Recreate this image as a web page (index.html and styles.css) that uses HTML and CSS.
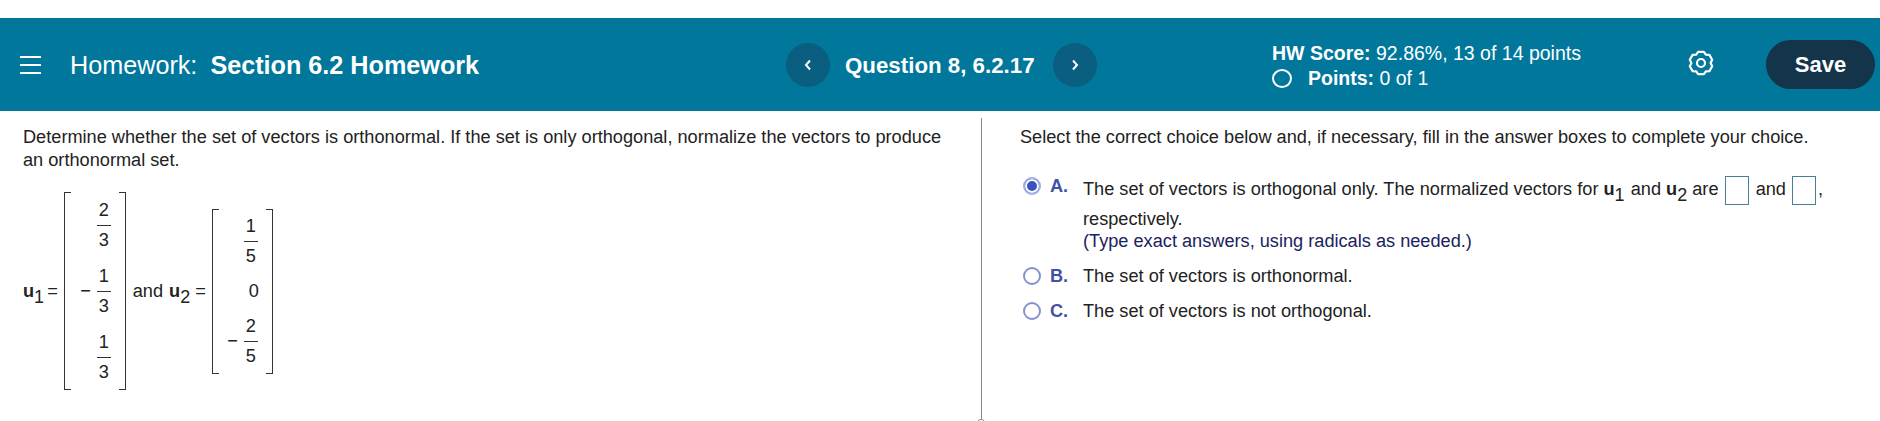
FILE: index.html
```html
<!DOCTYPE html>
<html lang="en">
<head>
<meta charset="utf-8">
<title>Homework: Section 6.2 Homework</title>
<link rel="stylesheet" href="styles.css">
</head>
<body>
<div class="spacer"></div>
<header class="bar">
  <div class="bar-left">
    <svg class="menu" viewBox="0 0 21 18" width="21" height="18"><path d="M0 1h21M0 9h21M0 17h21" stroke="#fff" stroke-width="2" fill="none"/></svg>
    <div class="title">Homework:<b>Section 6.2 Homework</b></div>
  </div>
  <nav class="qnav">
    <span class="round"><svg viewBox="0 0 8 12" width="8" height="12"><path d="M6 1.500 2 6l4 4.500" stroke="#fff" stroke-width="2" fill="none"/></svg></span>
    <b class="qname">Question 8, 6.2.17</b>
    <span class="round"><svg viewBox="0 0 8 12" width="8" height="12"><path d="M2 1.500 6 6l-4 4.500" stroke="#fff" stroke-width="2" fill="none"/></svg></span>
  </nav>
  <div class="score">
    <div><b>HW Score:</b> 92.86%, 13 of 14 points</div>
    <div class="points"><span class="ring"></span><span><b>Points:</b> 0 of 1</span></div>
  </div>
  <svg class="gear" viewBox="0 0 26 26" width="26" height="26"><path d="M10.100 1.900 15.900 1.900 17.800 4.700 21.400 4.900 24.200 9.700 22.600 13 24.200 16.300 21.400 21.100 17.800 21.300 15.900 24.100 10.100 24.100 8.200 21.300 4.600 21.100 1.800 16.300 3.400 13 1.800 9.700 4.600 4.900 8.200 4.700Z" fill="none" stroke="#fff" stroke-width="2.200" stroke-linejoin="round"/><circle cx="13" cy="13" r="4" fill="none" stroke="#fff" stroke-width="2.200"/></svg>
  <button class="save">Save</button>
</header>
<main class="panes">
  <section class="left">
    <p class="prompt">Determine whether the set of vectors is orthonormal. If the set is only orthogonal, normalize the vectors to produce an orthonormal set.</p>
    <div class="eq">
      <span class="vec"><b>u</b><sub>1</sub></span><span class="eqs">=</span>
      <div class="matrix m1">
        <span class="br l"></span>
        <div class="cells">
          <div class="cell"><span class="frac"><span class="num">2</span><span class="den">3</span></span></div>
          <div class="cell"><span class="minus">−</span><span class="frac"><span class="num">1</span><span class="den">3</span></span></div>
          <div class="cell"><span class="frac"><span class="num">1</span><span class="den">3</span></span></div>
        </div>
        <span class="br r"></span>
      </div>
      <span class="and">and</span><span class="vec"><b>u</b><sub>2</sub></span><span class="eqs">=</span>
      <div class="matrix m2">
        <span class="br l"></span>
        <div class="cells">
          <div class="cell"><span class="frac"><span class="num">1</span><span class="den">5</span></span></div>
          <div class="cell zero">0</div>
          <div class="cell"><span class="minus">−</span><span class="frac"><span class="num">2</span><span class="den">5</span></span></div>
        </div>
        <span class="br r"></span>
      </div>
    </div>
  </section>
  <section class="right">
    <p class="prompt">Select the correct choice below and, if necessary, fill in the answer boxes to complete your choice.</p>
    <div class="choice first">
      <span class="radio on"></span><span class="letter">A.</span>
      <div class="body">
        <div class="line">The set of vectors is orthogonal only. The normalized vectors for <b>u</b><sub>1</sub> <span class="gap">and</span> <b>u</b><sub>2</sub> are <span class="box"></span> and <span class="box"></span>,</div>
        <div class="resp">respectively.</div>
        <div class="hint">(Type exact answers, using radicals as needed.)</div>
      </div>
    </div>
    <div class="choice"><span class="radio"></span><span class="letter">B.</span><div class="body">The set of vectors is orthonormal.</div></div>
    <div class="choice"><span class="radio"></span><span class="letter">C.</span><div class="body">The set of vectors is not orthogonal.</div></div>
    <span class="handle"></span>
  </section>
</main>
</body>
</html>
```
FILE: styles.css
```css
* { box-sizing: border-box; }
html, body { margin: 0; height: 421px; overflow: hidden; background: #fff; }
body { font-family: "Liberation Sans", Arial, sans-serif; font-size: 18.18px; color: #222; }
.spacer { height: 18px; }
.bar { height: 93px; background: #00779b; color: #fff; display: flex; align-items: center; padding: 0 5px 0 20px; }
.bar-left { display: flex; align-items: center; width: 766px; flex: none; }
.menu { margin-right: 29px; }
.title { font-size: 25.2px; padding-top: 2px; }
.title b { margin-left: 13px; }
.qnav { display: flex; align-items: center; width: 486px; flex: none; }
.round { width: 44px; height: 44px; border-radius: 50%; background: #0a5f80; display: flex; align-items: center; justify-content: center; }
.qname { font-size: 22.3px; margin: 2px 18px 0 15px; white-space: nowrap; }
.score { width: 416px; flex: none; font-size: 19.5px; line-height: 25px; padding-top: 2px; }
.points { display: flex; align-items: center; gap: 16px; }
.ring { width: 20px; height: 19px; border: 2.5px solid #fff; border-radius: 50%; }
.gear { margin: 0 52px 3px 0; flex: none; }
.save { width: 109px; height: 49px; border: 0; border-radius: 25px; background: #14344a; color: #fff; font: bold 22px "Liberation Sans", Arial, sans-serif; flex: none; }
.panes { display: flex; height: 310px; }
.left { width: 982px; flex: none; padding: 8px 0 0 23px; border-right: 1px solid #8a8a8a; margin-top: 7px; }
.right { position: relative; flex: 1; min-width: 0; padding: 0 0 0 38px; margin-top: 7px; }
.prompt { margin: 0; line-height: 23px; width: 930px; }
.right .prompt { margin-top: 8px; width: auto; }
.eq { display: flex; align-items: center; margin-top: 19px; height: 200px; }
.vec { white-space: nowrap; }
sub { font-size: 18px; line-height: 0; vertical-align: -6px; }
.eqs { margin: 0 6px 0 3px; }
.and + .vec + .eqs { margin-left: 5px; }
.matrix { display: flex; align-items: stretch; }
.m1 { width: 62px; height: 198px; }
.m2 { width: 61px; height: 165px; }
.br { width: 7px; flex: none; border: 1px solid #333; }
.br.l { border-right: 0; }
.br.r { border-left: 0; }
.cells { flex: 1; display: flex; flex-direction: column; justify-content: space-around; }
.cell { display: flex; justify-content: flex-end; align-items: center; padding-right: 8px; }
.cell.zero { padding-right: 7px; line-height: 22px; }
.frac { display: flex; flex-direction: column; align-items: center; width: 14px; line-height: 22px; }
.num { padding-bottom: 4px; }
.den { border-top: 1px solid #333; width: 14px; text-align: center; padding-top: 3px; }
.minus { margin-right: 6px; }
.and { margin: 0 6px 0 7px; }
.choice { display: flex; margin-top: 13px; line-height: 22px; }
.choice.first { margin-top: 26px; }
.radio { width: 18px; height: 18px; flex: none; border: 2px solid #8592d0; border-radius: 50%; margin: 2px 9px 0 3px; background: #fff; }
.radio.on { background: #3a52c0; border-color: #9fb0e2; box-shadow: inset 0 0 0 2px #fff; }
.letter { width: 33px; flex: none; color: #3f51a8; font-weight: bold; }
.line { white-space: nowrap; padding-top: 1px; }
.gap { margin-left: 1px; }
.box { display: inline-block; width: 24px; height: 29px; border: 1px solid #4a7d98; vertical-align: middle; margin: 0 2px 0 1px; }
.resp { margin-top: 3px; }
.hint { color: #1a2260; }
.handle { position: absolute; left: -6px; bottom: -8px; width: 10px; height: 10px; border: 1px solid #8a8a8a; border-radius: 50%; background: #fff; }
```
